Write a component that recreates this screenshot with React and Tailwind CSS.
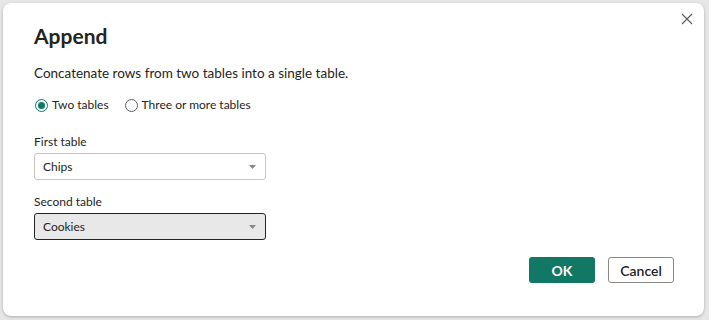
import React, { useState } from 'react';

const FONT = { fontFamily: 'Lato, "Open Sans", sans-serif' };

function Radio({ checked, label, onClick }) {
    return (
        <label className="flex items-center gap-[4px] cursor-pointer" onClick={onClick}>
            <span className={`w-[13px] h-[13px] rounded-full border flex items-center justify-center ${checked ? 'border-[#117865]' : 'border-[#605e5c]'}`}>
                {checked && <span className="w-[7px] h-[7px] rounded-full bg-[#117865]" />}
            </span>
            <span className="text-[12px] text-[#252423]">{label}</span>
        </label>
    );
}

function Select({ value, active }) {
    return (
        <div className={`w-[232px] h-[27px] flex items-center justify-between pl-[8px] pr-[9px] rounded-[3px] border ${active ? 'bg-[#e8e8e8] border-[#252423]' : 'bg-white border-[#c8c6c4]'}`}>
            <span className="text-[12px] text-[#252423]">{value}</span>
            <svg width="7" height="4" viewBox="0 0 7 4"><path d="M0 0h7L3.5 4z" fill="#8a8886" /></svg>
        </div>
    );
}

export default function App() {
    const [mode, setMode] = useState('two');

    return (
        <div className="w-[709px] h-[320px] bg-[#e6e6e6] p-[3px] pb-[4px] pr-[5px]" style={FONT}>
            <div className="relative w-full h-full bg-white rounded-[8px] shadow-[0_1px_3px_rgba(0,0,0,0.25)] pl-[31px] pr-[30px] pt-[19px] flex flex-col">
                {/* close */}
                <button className="absolute top-[9px] right-[11px] w-[13px] h-[13px] flex items-center justify-center">
                    <svg width="12" height="12" viewBox="0 0 12 12"><path d="M1 1l10 10M11 1L1 11" stroke="#605e5c" strokeWidth="1.2" /></svg>
                </button>

                <h1 className="text-[21px] font-bold text-[#252423] leading-[28px]">Append</h1>
                <p className="mt-[13px] text-[13.5px] text-[#252423] leading-[20px]">Concatenate rows from two tables into a single table.</p>

                <div className="mt-[13px] flex items-center gap-[16px] pl-[1px]">
                    <Radio checked={mode === 'two'} label="Two tables" onClick={() => setMode('two')} />
                    <Radio checked={mode === 'three'} label="Three or more tables" onClick={() => setMode('three')} />
                </div>

                <div className="mt-[20px] text-[12px] text-[#252423] leading-[16px]">First table</div>
                <div className="mt-[3px]"><Select value="Chips" /></div>

                <div className="mt-[14px] text-[12px] text-[#252423] leading-[16px]">Second table</div>
                <div className="mt-[3px]"><Select value="Cookies" active /></div>

                <div className="mt-[17px] flex justify-end gap-[13px]">
                    <button className="w-[66px] h-[26px] rounded-[3px] bg-[#117865] text-white text-[14px] font-bold">OK</button>
                    <button className="w-[66px] h-[26px] rounded-[3px] bg-white border border-[#8a8886] text-[#252423] text-[14px] font-semibold">Cancel</button>
                </div>
            </div>
        </div>
    );
}
